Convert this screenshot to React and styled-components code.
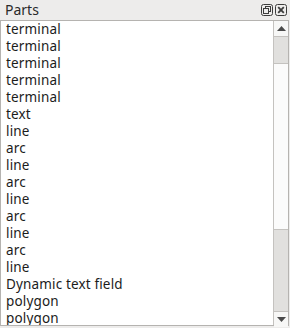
import React from "react";
import styled, { createGlobalStyle } from "styled-components";

const GlobalStyle = createGlobalStyle`
  html, body {
    margin: 0;
    padding: 0;
    background: #edeceb;
  }
  body {
    font-family: "Noto Sans", "DejaVu Sans", sans-serif;
    font-size: 13.5px;
    color: #1a1a1a;
  }
`;

const Dock = styled.div`
  width: 290px;
  height: 328px;
  display: flex;
  flex-direction: column;
  background: #edeceb;
  box-sizing: border-box;
`;

const TitleBar = styled.div`
  height: 20px;
  display: flex;
  align-items: center;
  padding: 0 3px 0 5px;
  box-sizing: border-box;
`;

const Title = styled.span`
  flex: 1;
  font-size: 14px;
  color: #2a2a2a;
  line-height: 20px;
`;

const TitleButton = styled.div`
  width: 12px;
  height: 12px;
  margin-left: 2px;
  display: flex;
  align-items: center;
  justify-content: center;
`;

const Frame = styled.div`
  flex: 1;
  display: flex;
  margin: 0 1px 2px 0;
  border: 1px solid #b5b3b0;
  background: #ffffff;
  min-height: 0;
`;

const List = styled.div`
  flex: 1;
  overflow: hidden;
`;

const Row = styled.div`
  height: 17px;
  line-height: 17px;
  padding-left: 5px;
  white-space: nowrap;
  letter-spacing: 0.15px;
  color: #1c1c1c;
`;

const Scrollbar = styled.div`
  width: 14px;
  display: flex;
  flex-direction: column;
  border-left: 1px solid #c4c2bf;
  background: #e1e0de;
`;

const ArrowButton = styled.div`
  height: 15px;
  flex: none;
  display: flex;
  align-items: center;
  justify-content: center;
  background: #f7f7f6;
  border-top: ${(p) => (p.$down ? "1px solid #c4c2bf" : "none")};
  border-bottom: ${(p) => (p.$down ? "none" : "1px solid #c4c2bf")};
`;

const Trough = styled.div`
  flex: 1;
  display: flex;
  flex-direction: column;
`;

const Handle = styled.div`
  background: #fbfbfb;
  border-top: 1px solid #c4c2bf;
  border-bottom: 1px solid #c4c2bf;
  box-sizing: border-box;
`;

const Arrow = ({ down }) => (
  <svg width="9" height="5" viewBox="0 0 9 5">
    <polygon
      points={down ? "0,0 9,0 4.5,5" : "0,5 9,5 4.5,0"}
      fill="#4a4a4a"
    />
  </svg>
);

const FloatIcon = () => (
  <svg width="12" height="12" viewBox="0 0 12 12">
    <rect x="0.5" y="0.5" width="11" height="11" rx="2" fill="none" stroke="#3c3c3c" />
    <rect x="4.5" y="2.5" width="5" height="5" fill="none" stroke="#3c3c3c" />
    <rect x="2.5" y="4.5" width="5" height="5" fill="#edeceb" stroke="#3c3c3c" />
  </svg>
);

const CloseIcon = () => (
  <svg width="12" height="12" viewBox="0 0 12 12">
    <rect x="0.5" y="0.5" width="11" height="11" rx="2" fill="none" stroke="#3c3c3c" />
    <path d="M3.2 3.2 L8.8 8.8 M8.8 3.2 L3.2 8.8" stroke="#3c3c3c" strokeWidth="1.8" />
  </svg>
);

const parts = [
  "terminal",
  "terminal",
  "terminal",
  "terminal",
  "terminal",
  "text",
  "line",
  "arc",
  "line",
  "arc",
  "line",
  "arc",
  "line",
  "arc",
  "line",
  "Dynamic text field",
  "polygon",
  "polygon",
];

// scroll handle geometry (track is 274px)
const trackHeight = 274;
const handleTop = 26;
const handleHeight = 167;

const App = () => {
  return (
    <Dock>
      <GlobalStyle />
      <TitleBar>
        <Title>Parts</Title>
        <TitleButton>
          <FloatIcon />
        </TitleButton>
        <TitleButton>
          <CloseIcon />
        </TitleButton>
      </TitleBar>
      <Frame>
        <List>
          {parts.map((p, i) => (
            <Row key={i}>{p}</Row>
          ))}
        </List>
        <Scrollbar>
          <ArrowButton>
            <Arrow />
          </ArrowButton>
          <Trough>
            <div style={{ height: handleTop }} />
            <Handle style={{ height: handleHeight }} />
            <div style={{ height: trackHeight - handleTop - handleHeight }} />
          </Trough>
          <ArrowButton $down>
            <Arrow down />
          </ArrowButton>
        </Scrollbar>
      </Frame>
    </Dock>
  );
};

export default App;
